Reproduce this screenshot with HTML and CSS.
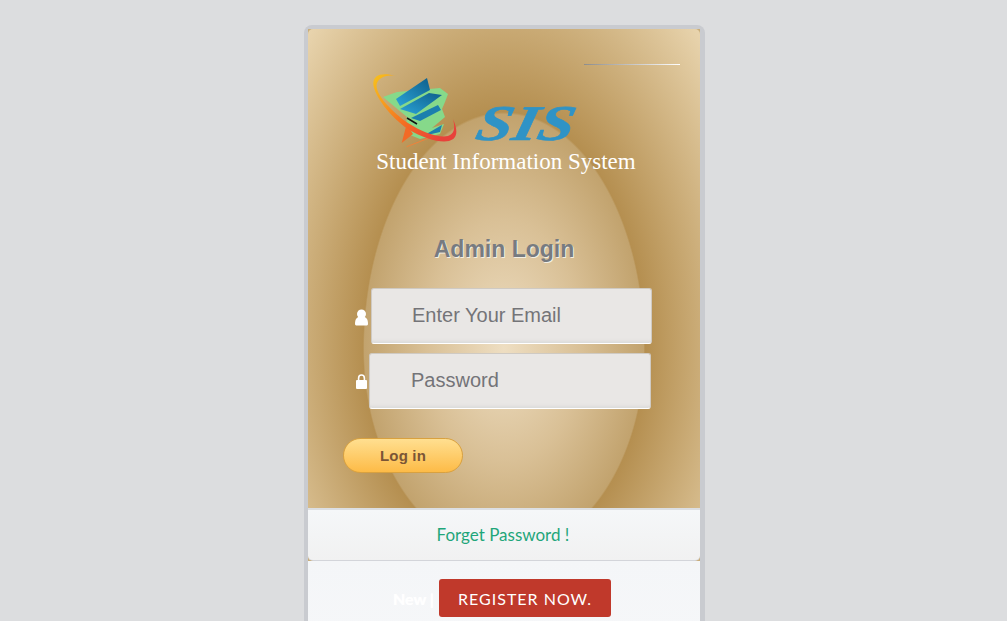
FILE: index.html
```html
<!DOCTYPE html>
<html lang="en">
<head>
	<meta charset="UTF-8">
	<title>Admin Login</title>
	<link rel="stylesheet" href="styles.css">
</head>
<body>
	<div class="card">
		<div class="login">
			<div class="panel">
				<div class="topline"></div>
				<div class="logo">
					<svg class="logo-mark" width="90" height="75" viewBox="0 0 90 75">
						<defs>
							<linearGradient id="swoosh" x1="0" y1="0" x2="1" y2="0.7">
								<stop offset="0" stop-color="#f7c21c"/>
								<stop offset="0.3" stop-color="#f79a1e"/>
								<stop offset="0.6" stop-color="#f46c22"/>
								<stop offset="1" stop-color="#e8413a"/>
							</linearGradient>
							<linearGradient id="book" x1="0" y1="1" x2="1" y2="0">
								<stop offset="0" stop-color="#2aa3d6"/>
								<stop offset="1" stop-color="#0f5f8c"/>
							</linearGradient>
						</defs>
						<!-- green pages -->
						<polygon fill="#86d98a" points="13,24 27,19 70,15 78,21 75,29 72,36 75,44 62,55 74,51 70,61 50,66 40,62 36,52 37,44"/>
						<!-- blue covers -->
						<polygon fill="url(#book)" points="26,26 57,5 60,17 30,33"/>
						<polygon fill="url(#book)" points="30,36 59,20 72,22 46,41"/>
						<polygon fill="#1b7fae" points="41,45 68,32 71,37 50,48"/>
						<polygon fill="#1b7fae" points="53,63 72,52 70,59"/>
						<path d="M37 45 L47 51" stroke="#111" stroke-width="1.5"/>
						<polygon fill="#f26a26" points="31.700,70 36.700,51 43,61"/>
						<path d="M36.700 73.700 L58.300 65.300" stroke="#f0823a" stroke-width="1"/>
						<path fill="url(#swoosh)" d="M26 3 C12 -1 3 2 3.300 11 C4 22 20 44 38 56 C54 66 70 70 79 68 C88 66 88 57 83 46 C85 54 85 61 78 63 C68 65 52 59 38 50 C22 39 7 23 6.500 13 C6.500 6 15 1 26 3 Z"/>
					</svg>
					<span class="logo-sis">SIS</span>
				</div>
				<div class="tagline">Student Information System</div>
				<h2 class="title">Admin Login</h2>
				<form class="form">
					<div class="row row-email">
						<svg class="icon" width="13" height="17" viewBox="0 0 13 17">
							<circle cx="6.500" cy="5" r="4.500" fill="#fff"/>
							<path fill="#fff" d="M0 15 C0 10 2 8 4 8 H9 C11 8 13 10 13 15 C13 16 12 16.500 11 16.500 H2 C1 16.500 0 16 0 15 Z"/>
						</svg>
						<input class="field" type="text" placeholder="Enter Your Email">
					</div>
					<div class="row row-pass">
						<svg class="icon" width="11" height="15" viewBox="0 0 11 15">
							<path fill="none" stroke="#fff" stroke-width="1.600" d="M2.600 6.500 V4.200 C2.600 2.300 3.800 1 5.500 1 C7.200 1 8.400 2.300 8.400 4.200 V6.500"/>
							<rect x="0" y="6" width="11" height="9" rx="1" fill="#fff"/>
						</svg>
						<input class="field" type="password" placeholder="Password">
					</div>
					<button class="btn-login" type="button">Log in</button>
				</form>
			</div>
			<div class="forget"><a href="#">Forget Password !</a></div>
		</div>
		<div class="register">
			<span class="new">New |</span>
			<a class="btn-register" href="#">REGISTER NOW.</a>
		</div>
	</div>
</body>
</html>
```

FILE: styles.css
```css
html,body{
	height: 100%;
	overflow: hidden;
}
body{
	margin: 0;
	background: #dcdddf;
	font-family: "Liberation Sans", Arial, sans-serif;
}
a{
	text-decoration: none;
}
.card{
	width: 392px;
	margin: 25px 0 0 304px;
	border: 4px solid #c9cbd0;
	border-right-width: 5px;
	border-bottom: 0;
	border-radius: 8px 8px 0 0;
	background: #f4f6f8;
}
.login{
	background: #c9ad7a;
}
/* egg shape: top and bottom half have a different height */
.panel{
	height: 479px;
	box-sizing: border-box;
	padding-top: 35px;
	border-radius: 5px 5px 0 0;
	background:
		radial-gradient(141px 237px at 196px 320px, #eedec2 0, #d9c096 55%, #c2a36e 99%, #b58f50 100%, #e9d5af 194%) 0 0 / 100% 320px no-repeat,
		radial-gradient(141px 205px at 196px 0, #eedec2 0, #d9c096 55%, #c2a36e 99%, #b58f50 100%, #e9d5af 194%) 0 320px / 100% 159px no-repeat;
}
.topline{
	width: 96px;
	height: 1px;
	margin: 0 20px 0 auto;
	background: linear-gradient(to right, #8d8d8d, #fff);
}
.logo{
	display: flex;
	align-items: flex-end;
	margin: 8px 0 0 62px;
	height: 75px;
}
.logo-mark{
	display: block;
	flex: none;
}
.logo-sis{
	margin: 0 0 0 12px;
	font: italic bold 50px/50px "Liberation Serif", serif;
	color: #2f93c6;
	-webkit-text-stroke: .6px #2f93c6;
	transform: scaleX(1.3) skewX(-10deg);
	transform-origin: left bottom;
}
.tagline{
	padding-left: 4px;
	text-align: center;
	font: 23px/28px "Liberation Serif", serif;
	color: #fff;
}
.title{
	margin: 58px 0 0;
	text-align: center;
	font-size: 23px;
	line-height: 30px;
	font-weight: bold;
	color: #777b80;
	text-shadow: 1px 1px 0 #f3eee2;
}
.form{
	margin-top: 24px;
	padding-left: 47px;
}
.row{
	display: flex;
	align-items: center;
	margin-bottom: 9px;
}
.row-email .icon{
	margin: 2px 3px 0 0;
}
.row-pass .icon{
	margin: 0 2px 0 1px;
}
.field{
	box-sizing: border-box;
	height: 56px;
	padding: 0 0 2px 40px;
	border: 1px solid #cfcac3;
	border-bottom-color: #fff;
	border-radius: 3px;
	background: #e9e7e5;
	box-shadow: inset 0 -4px 3px -2px #dcdbda;
	font: 20px "Liberation Sans", Arial, sans-serif;
	outline: none;
}
.row-email .field{
	width: 281px;
}
.row-pass .field{
	width: 282px;
	padding-left: 41px;
}
.field::placeholder{
	color: #747478;
	opacity: 1;
}
.btn-login{
	display: block;
	box-sizing: border-box;
	width: 120px;
	height: 35px;
	margin: 29px 0 0 -12px;
	border: 1px solid #d9a13f;
	border-radius: 18px;
	background: linear-gradient(#ffdf90, #fdbb47);
	font: bold 15px "Liberation Sans", Arial, sans-serif;
	letter-spacing: .2px;
	color: #7b5536;
}
.forget{
	box-sizing: border-box;
	height: 53px;
	padding-right: 2px;
	border-top: 2px solid #dcdfe3;
	border-bottom: 1px solid #d3d5da;
	border-radius: 0 0 5px 5px;
	background: linear-gradient(#f5f7f9, #f1f1f1);
	text-align: center;
	font: 17px/49px Lato, sans-serif;
}
.forget a{
	color: #1fa67a;
}
.register{
	display: flex;
	justify-content: center;
	align-items: flex-start;
	gap: 5px;
	height: 75px;
	box-sizing: border-box;
	padding: 18px 4px 0 0;
	background: linear-gradient(#f4f6f8, #f6f7f9);
	font-family: Lato, sans-serif;
}
.new{
	margin-top: 10px;
	font-size: 16px;
	font-weight: bold;
	color: #fff;
	text-shadow: 0 0 1px #fff;
}
.btn-register{
	width: 172px;
	height: 38px;
	border-radius: 3px;
	background: #c0392b;
	text-align: center;
	font-size: 16px;
	line-height: 40px;
	letter-spacing: 1px;
	color: #fff;
}
```
